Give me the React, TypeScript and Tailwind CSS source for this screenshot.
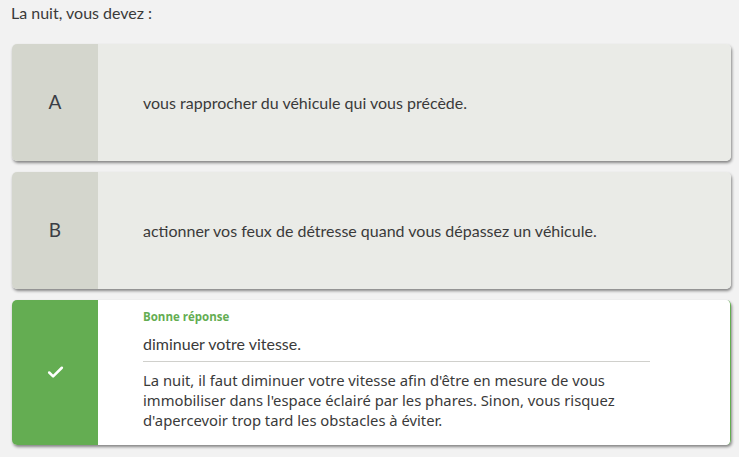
import React from "react";
import { Check } from "lucide-react";

function Option({ letter, text }: { letter: string; text: string }) {
  return (
    <div className="flex h-[117px] rounded-[5px] overflow-hidden shadow-[1px_2px_3px_rgba(0,0,0,0.45)]">
      <div className="w-[86px] shrink-0 bg-[#d4d6cd] flex items-center justify-center text-[19px] text-[#3a3e45] font-['Lato',sans-serif]">
        {letter}
      </div>
      <div className="flex-1 bg-[#eaebe7] flex items-center pl-[45px] text-[16px] text-[#3a3a3a] font-['Lato',sans-serif]">
        {text}
      </div>
    </div>
  );
}

export default function App() {
  return (
    <div className="min-h-screen w-full bg-[#f2f2f2] pl-[12px] pr-[8px] font-['Lato',sans-serif]">
      <div className="pt-[3px] -ml-[1px] text-[16px] leading-5 text-[#3a3a3a]">La nuit, vous devez :</div>
      <div className="mt-[21px] flex flex-col gap-[11px]">
        <Option letter="A" text="vous rapprocher du véhicule qui vous précède." />
        <Option letter="B" text="actionner vos feux de détresse quand vous dépassez un véhicule." />
        <div className="flex h-[145px] rounded-[5px] overflow-hidden shadow-[1px_2px_3px_rgba(0,0,0,0.45)] border-r border-[#64ad52]">
          <div className="w-[86px] shrink-0 bg-[#64ad52] flex items-center justify-center text-white">
            <Check size={19} strokeWidth={3.2} />
          </div>
          <div className="flex-1 bg-white pl-[45px] pt-[9px]">
            <div className="w-[507px]">
              <div className="text-[11.5px] leading-4 font-bold text-[#64ad52] font-['Open_Sans',sans-serif]">Bonne réponse</div>
              <div className="mt-[9px] text-[16px] leading-5 text-[#3a3a3a] font-['Lato',sans-serif]">diminuer votre vitesse.</div>
              <div className="mt-[7px] h-px bg-[#d0d0cc]" />
              <div className="mt-[8px] text-[14.8px] leading-5 text-[#3a3a3a] font-['Noto_Sans',sans-serif] whitespace-nowrap">
                La nuit, il faut diminuer votre vitesse afin d'être en mesure de vous
                <br />
                immobiliser dans l'espace éclairé par les phares. Sinon, vous risquez
                <br />
                d'apercevoir trop tard les obstacles à éviter.
              </div>
            </div>
          </div>
        </div>
      </div>
    </div>
  );
}
